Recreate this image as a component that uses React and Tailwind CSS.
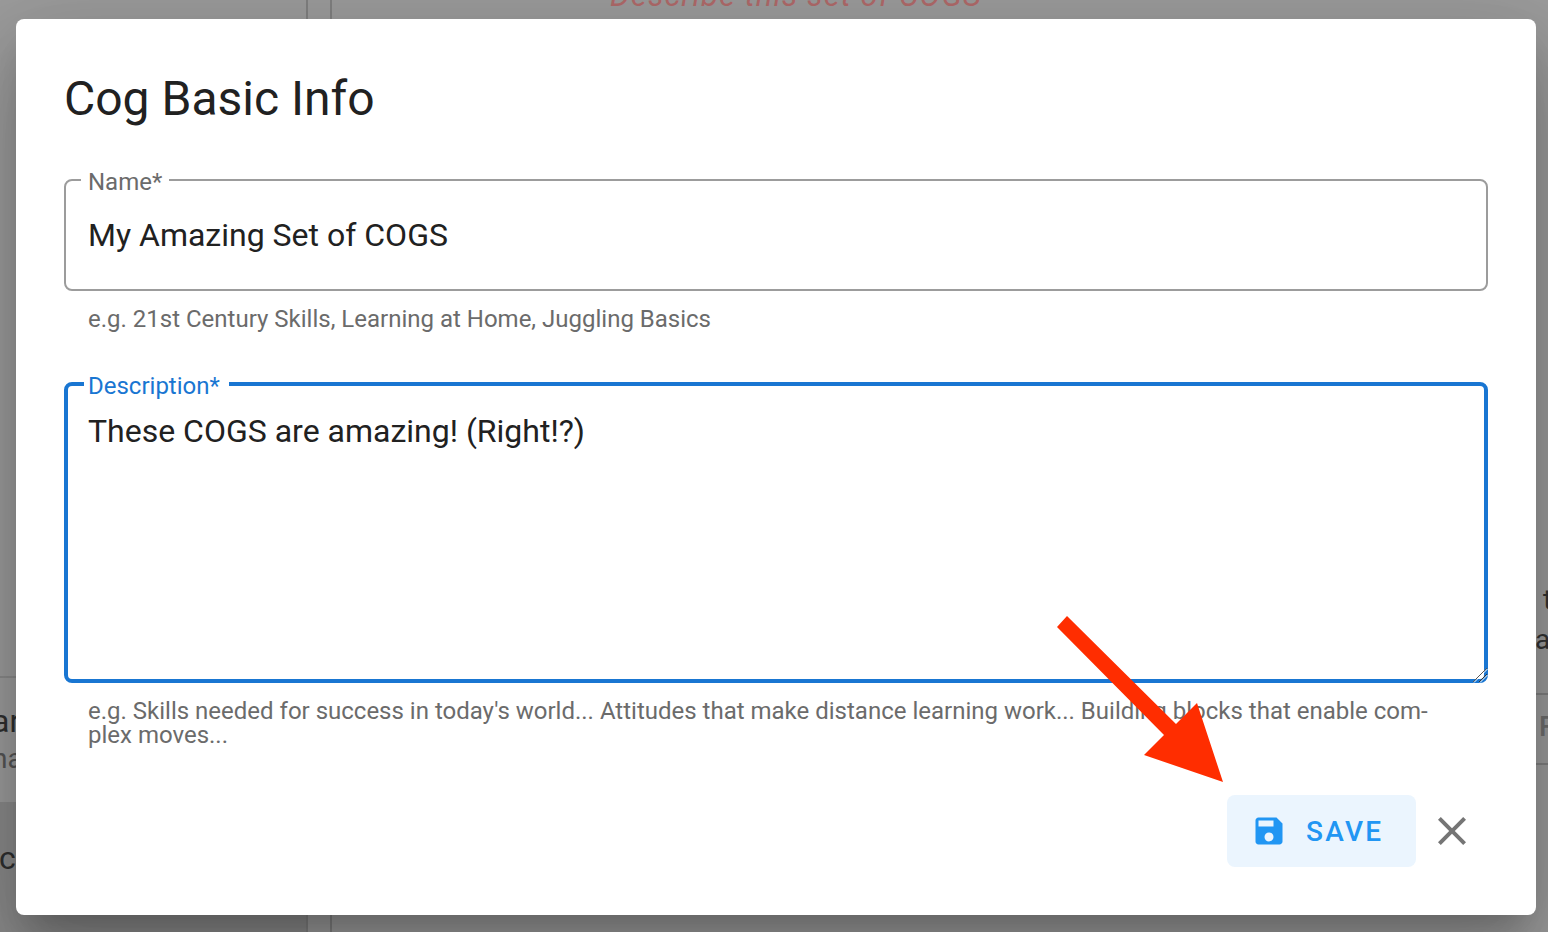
function Field({ label, focused, height, children }) {
  return (
    <div className={`relative w-full ${height}`}>
      {children}
      <fieldset
        className={`pointer-events-none absolute inset-x-0 bottom-0 m-0 p-0 rounded-[8px] ${
          focused ? "-top-[10px] border-[4px] border-[#1976d2]" : "-top-[12px] border-2 border-[#9c9c9c]"
        }`}
      >
        <legend
          className={`block h-[24px] text-[24px] leading-[24px] ${
            focused ? "ml-[16px] pl-[4px] pr-[9px] text-[#1976d2]" : "ml-[15px] pl-[7px] pr-[7px] text-[#6b6b6b]"
          }`}
        >
          <span className="relative top-[2px]">{label}</span>
        </legend>
      </fieldset>
    </div>
  );
}

export default function App() {
  return (
    <div className="relative flex h-[932px] w-full overflow-hidden bg-[#9c9c9c] font-['Roboto',sans-serif]">
      {/* dimmed page behind the dialog */}
      <div className="flex h-full w-[308px] shrink-0 flex-col border-r-2 border-[#808080] pt-[676px] text-[#2f2f2f]">
        <div className="h-[126px] border-t-2 border-[#8a8a8a] pt-[23px]">
          <div className="-ml-[8px] text-[32px] leading-[40px]">ar</div>
          <div className="-ml-[8px] text-[28px] leading-[36px] text-[#555]">na</div>
        </div>
        <div className="flex-1 bg-[#8a8a8a] pt-[36px]">
          <div className="-ml-[1px] text-[32px] leading-[40px]">c</div>
        </div>
      </div>
      <div className="h-full w-[24px] shrink-0 border-r-2 border-[#808080]" />
      <div className="flex h-full flex-1 flex-col">
        <div className="-mt-[22px] pl-[278px] text-[31px] italic leading-[36px] tracking-[1.1px] text-[#b06a6a]">
          Describe this set of COGS
        </div>
        <div className="mt-[570px] pl-[1211px] text-[28px] leading-[32px] text-[#333]">t</div>
        <div className="pl-[1203px] pt-[8px] text-[28px] leading-[32px] text-[#333]">a</div>
        <div className="mt-[37px] h-[72px] border-y-2 border-[#808080] pl-[1207px] pt-[16px] text-[28px] font-medium leading-[32px] text-[#6e6e6e]">
          F
        </div>
      </div>

      {/* dialog */}
      <div className="absolute left-[16px] top-[19px] flex h-[896px] w-[1520px] flex-col rounded-[8px] bg-white p-[48px] shadow-[0_22px_30px_-14px_rgba(0,0,0,0.2),0_48px_76px_6px_rgba(0,0,0,0.14),0_18px_92px_16px_rgba(0,0,0,0.12)]">
        <h2 className="h-[64px] text-[48px] font-normal leading-[64px] text-[#212121]">Cog Basic Info</h2>

        <div className="mt-[49px]">
          <Field label="Name*" height="h-[111px]">
            <div className="flex h-full items-center px-[24px] pb-[2px] text-[32px] leading-[40px] text-[#212121]">
              My Amazing Set of COGS
            </div>
          </Field>
        </div>
        <p className="mt-[16px] pl-[24px] text-[24px] leading-[24px] text-[#6b6b6b]">
          e.g. 21st Century Skills, Learning at Home, Juggling Basics
        </p>

        <div className="mt-[51px]">
          <Field label="Description*" focused height="h-[301px]">
            <textarea
              readOnly
              value="These COGS are amazing! (Right!?)"
              className="block h-full w-full resize-none rounded-[8px] bg-transparent px-[24px] pt-[29px] text-[32px] leading-[40px] text-[#212121] outline-none"
            />
            <svg viewBox="0 0 16 16" className="pointer-events-none absolute bottom-0 right-0 z-10 h-[16px] w-[16px]" aria-hidden="true">
              <path d="M1 15 15 1" stroke="#555" strokeWidth="1" />
              <path d="M2 15.5 15.5 2" stroke="#fff" strokeWidth="1" />
              <path d="M7 15 15 7" stroke="#333" strokeWidth="1" />
              <path d="M8 15.5 15.5 8" stroke="#fff" strokeWidth="1" />
            </svg>
          </Field>
        </div>
        <p className="mt-[16px] pl-[24px] text-[24px] leading-[24px] text-[#6b6b6b]">
          e.g. Skills needed for success in today's world... Attitudes that make distance learning work... Building blocks that enable com-
          <br />
          plex moves...
        </p>

        <div className="mt-[48px] flex justify-end">
          <button className="flex h-[72px] w-[189px] items-center rounded-[8px] bg-[#ebf5fe] pl-[24px] text-[28px] font-medium tracking-[2.3px] text-[#2196f3]">
            <svg viewBox="0 0 24 24" className="h-[36px] w-[36px] fill-current" aria-hidden="true">
              <path d="M17 3H5c-1.11 0-2 .9-2 2v14c0 1.1.89 2 2 2h14c1.1 0 2-.9 2-2V7l-4-4zm-5 16c-1.66 0-3-1.34-3-3s1.34-3 3-3 3 1.34 3 3-1.34 3-3 3zm3-10H5V5h10v4z" />
            </svg>
            <span className="ml-[19px] pt-[2px]">SAVE</span>
          </button>
          <button className="flex h-[72px] w-[72px] items-center justify-center text-[#757575]">
            <svg viewBox="0 0 24 24" className="h-[48px] w-[48px] fill-current" aria-hidden="true">
              <path d="M19 6.41 17.59 5 12 10.59 6.41 5 5 6.41 10.59 12 5 17.59 6.41 19 12 13.41 17.59 19 19 17.59 13.41 12z" />
            </svg>
          </button>
        </div>
      </div>

      {/* annotation arrow */}
      <svg className="pointer-events-none absolute left-0 top-0 h-[932px] w-[1548px]" viewBox="0 0 1548 932" aria-hidden="true">
        <polygon points="1067,616 1057,627 1164,735 1144,755 1223,782 1197,703 1176,724" fill="#ff2d00" />
      </svg>
    </div>
  );
}
